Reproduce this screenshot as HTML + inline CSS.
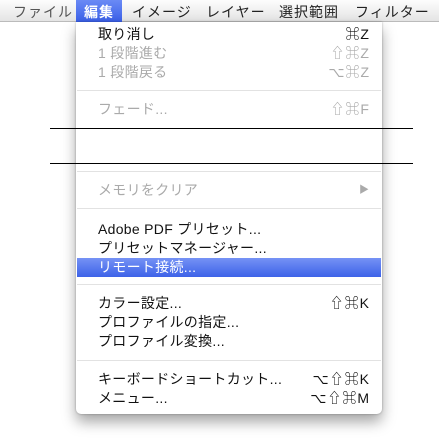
<!DOCTYPE html><html><head><meta charset="utf-8"><style>
body{margin:0;width:439px;height:446px;background:#fff;position:relative;overflow:hidden;font-family:"Liberation Sans","Noto Sans CJK JP",sans-serif;font-size:14px;}
.bar{position:absolute;left:0;top:0;width:439px;height:22px;background:linear-gradient(#fdfdfd,#e4e4e4);border-bottom:1px solid #bbb;box-sizing:border-box}
.bar span{position:absolute;top:2px;color:#222;letter-spacing:1px}
.hl{position:absolute;left:76px;top:0;width:46px;height:22px;background:linear-gradient(#6a8af5,#3a5fe8)}
.menu{position:absolute;left:76px;top:22px;width:306px;height:392px;background:#fff;border-radius:0 0 5px 5px;box-shadow:0 8px 14px rgba(0,0,0,.35),0 0 2px rgba(0,0,0,.3)}
.r{position:absolute;left:98px;height:19px;line-height:19px;color:#111;width:272px;letter-spacing:0.3px}
.r b{position:absolute;right:0;font-weight:normal;letter-spacing:1px}
.d{color:#aaa}
.sep{position:absolute;left:77px;width:304px;height:1px;background:#e2e2e2}
.blk{position:absolute;left:50px;width:363px;height:1px;background:#000}
.sel{position:absolute;left:77px;top:258px;width:304px;height:19px;background:linear-gradient(#7592f5,#3d62e8)}
</style></head><body>
<div class="bar"><div class="hl"></div>
<span style="left:13px;color:#555">ファイル</span>
<span style="left:84px;color:#fff;font-weight:bold">編集</span>
<span style="left:132px">イメージ</span>
<span style="left:206px">レイヤー</span>
<span style="left:279px">選択範囲</span>
<span style="left:355px">フィルター</span></div>
<div class="menu"></div>
<div class="r" style="top:25px">取り消し<b>⌘Z</b></div>
<div class="r d" style="top:44px">1 段階進む<b>⇧⌘Z</b></div>
<div class="r d" style="top:63px">1 段階戻る<b>⌥⌘Z</b></div>
<div class="sep" style="top:90px"></div>
<div class="r d" style="top:100px">フェード...<b>⇧⌘F</b></div>
<div class="blk" style="top:128px"></div>
<div class="blk" style="top:163px"></div>
<div class="sep" style="top:171px"></div>
<div class="r d" style="top:181px">メモリをクリア<b style="font-size:10px">▶</b></div>
<div class="sep" style="top:208px"></div>
<div class="r" style="top:220px">Adobe PDF プリセット...</div>
<div class="r" style="top:239px">プリセットマネージャー...</div>
<div class="sel"></div>
<div class="r" style="top:258px;color:#fff">リモート接続...</div>
<div class="sep" style="top:284px"></div>
<div class="r" style="top:294px">カラー設定...<b>⇧⌘K</b></div>
<div class="r" style="top:313px">プロファイルの指定...</div>
<div class="r" style="top:332px">プロファイル変換...</div>
<div class="sep" style="top:360px"></div>
<div class="r" style="top:370px">キーボードショートカット...<b>⌥⇧⌘K</b></div>
<div class="r" style="top:389px">メニュー...<b>⌥⇧⌘M</b></div>
</body></html>
